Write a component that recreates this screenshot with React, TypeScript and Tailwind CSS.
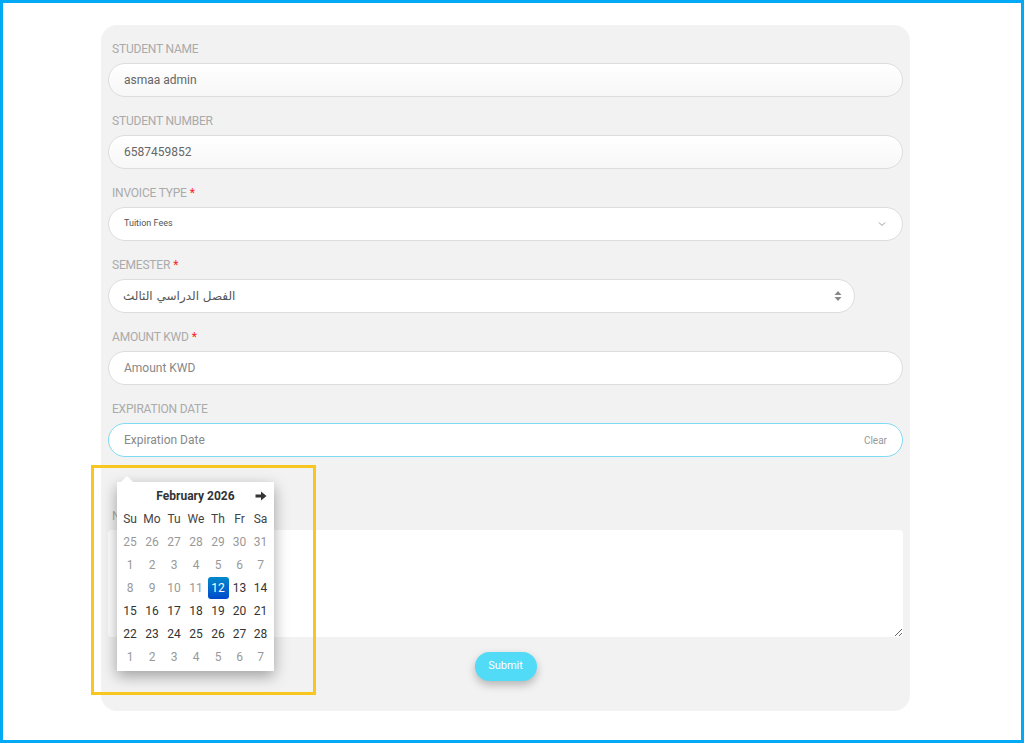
import React from 'react';

const labelCls = "block pl-[4px] mb-[5px] text-[12px] leading-[18px] uppercase text-[#aaaaaa] tracking-[-0.2px]";
const inputCls = "w-full h-[34px] rounded-full border border-[#dddddd] px-[15px] text-[12px] text-[#666666] outline-none";

function Req() {
  return <span className="text-[#ff2222] ml-[3px]">*</span>;
}

const weekDays = ["Su", "Mo", "Tu", "We", "Th", "Fr", "Sa"];

const days: { d: number; muted: boolean; active?: boolean }[] = [
  ...[25, 26, 27, 28, 29, 30, 31].map((d) => ({ d, muted: true })),
  ...[1, 2, 3, 4, 5, 6, 7, 8, 9, 10, 11].map((d) => ({ d, muted: true })),
  { d: 12, muted: false, active: true },
  ...[13, 14, 15, 16, 17, 18, 19, 20, 21, 22, 23, 24, 25, 26, 27, 28].map((d) => ({ d, muted: false })),
  ...[1, 2, 3, 4, 5, 6, 7].map((d) => ({ d, muted: true })),
];

function DatePicker() {
  return (
    <div className="absolute left-[16px] top-[457px] w-[157px] bg-white pt-[2px] pb-[3px] pl-[2px] pr-[3px] shadow-[0_5px_14px_rgba(0,0,0,0.35)] font-['Roboto',sans-serif]">
      {/* caret */}
      <div className="absolute -top-[6px] left-[4px] w-0 h-0 border-l-[6px] border-r-[6px] border-b-[6px] border-l-transparent border-r-transparent border-b-white" />
      <div className="grid grid-cols-[22px_22px_22px_22px_22px_21px_21px] text-center">
        <div className="h-[23px]" />
        <div className="col-span-5 h-[23px] flex items-center justify-center text-[12px] font-bold text-[#333333]">
          February 2026
        </div>
        <div className="h-[23px] flex items-center justify-center">
          <svg width="12" height="10" viewBox="0 0 12 10">
            <rect x="0.5" y="3.5" width="6" height="3" fill="#333333" />
            <path d="M6 0.5 L11.5 5 L6 9.5 Z" fill="#333333" />
          </svg>
        </div>
        {weekDays.map((w) => (
          <div key={w} className="h-[23px] flex items-center justify-center text-[12px] text-[#444444]">
            {w}
          </div>
        ))}
        {days.map((x, i) => (
          <div key={i} className="h-[23px] flex items-center justify-center">
            {x.active ? (
              <span className="w-[21px] h-[22px] flex items-center justify-center rounded-[3px] bg-gradient-to-b from-[#0088cc] to-[#0048cc] text-white text-[12px]">
                {x.d}
              </span>
            ) : (
              <span className={`text-[12px] ${x.muted ? "text-[#999999]" : "text-[#333333]"}`}>{x.d}</span>
            )}
          </div>
        ))}
      </div>
    </div>
  );
}

export default function App() {
  return (
    <div className="w-[1024px] h-[743px] border-[3px] border-[#03a9f4] bg-white overflow-hidden font-['Roboto','DejaVu_Sans',sans-serif]">
      <div className="relative ml-[98px] mt-[22px] w-[809px] rounded-[16px] bg-[#f2f2f2] pt-[15px] px-[7px] pb-[30px]">
        <div className="mb-[15px]">
          <label className={labelCls}>Student Name</label>
          <div className={`${inputCls} flex items-center bg-gradient-to-b from-white to-[#f7f7f7]`}>asmaa admin</div>
        </div>

        <div className="mb-[15px]">
          <label className={labelCls}>Student Number</label>
          <div className={`${inputCls} flex items-center bg-gradient-to-b from-white to-[#f7f7f7]`}>6587459852</div>
        </div>

        <div className="mb-[15px]">
          <label className={labelCls}>Invoice Type<Req /></label>
          <div className={`${inputCls} flex items-center justify-between bg-white`}>
            <span className="text-[9px] text-[#555555]">Tuition Fees</span>
            <svg width="8" height="6" viewBox="0 0 8 6" className="mr-[1px]">
              <path d="M1 1.5 L4 4.5 L7 1.5" fill="none" stroke="#999999" strokeWidth="1" />
            </svg>
          </div>
        </div>

        <div className="mb-[15px]">
          <label className={labelCls}>Semester<Req /></label>
          <div className="w-[747px] h-[34px] rounded-full border border-[#dddddd] bg-white pl-[14px] pr-[12px] flex items-center justify-between">
            <span className="text-[12px] text-[#555555] font-['DejaVu_Sans',sans-serif]" dir="rtl">الفصل الدراسي الثالث</span>
            <svg width="8" height="12" viewBox="0 0 8 12">
              <path d="M4 1 L7.5 5 L0.5 5 Z" fill="#888888" />
              <path d="M4 11 L7.5 7 L0.5 7 Z" fill="#888888" />
            </svg>
          </div>
        </div>

        <div className="mb-[15px]">
          <label className={labelCls}>Amount KWD<Req /></label>
          <div className={`${inputCls} flex items-center bg-white text-[#888888]`}>Amount KWD</div>
        </div>

        <div className="mb-[50px]">
          <label className={labelCls}>Expiration Date</label>
          <div className="w-full h-[34px] rounded-full border border-[#7fdaf3] bg-white px-[15px] flex items-center justify-between">
            <span className="text-[12px] text-[#888888]">Expiration Date</span>
            <span className="text-[10px] text-[#999999]">Clear</span>
          </div>
        </div>

        <div>
          <label className={labelCls}>Notes</label>
          <textarea className="block w-full h-[107px] rounded-[4px] bg-white outline-none border-0 resize-y" />
        </div>

        <div className="flex justify-center mt-[15px]">
          <button className="h-[29px] w-[62px] rounded-full bg-[#52dbf6] text-white text-[11px] shadow-[0_4px_8px_rgba(0,0,0,0.25)]">
            Submit
          </button>
        </div>

        <DatePicker />

        {/* highlight annotation */}
        <div className="absolute left-[-10px] top-[440px] w-[225px] h-[230px] border-[3px] border-[#f8c61e] pointer-events-none" />
      </div>
    </div>
  );
}
